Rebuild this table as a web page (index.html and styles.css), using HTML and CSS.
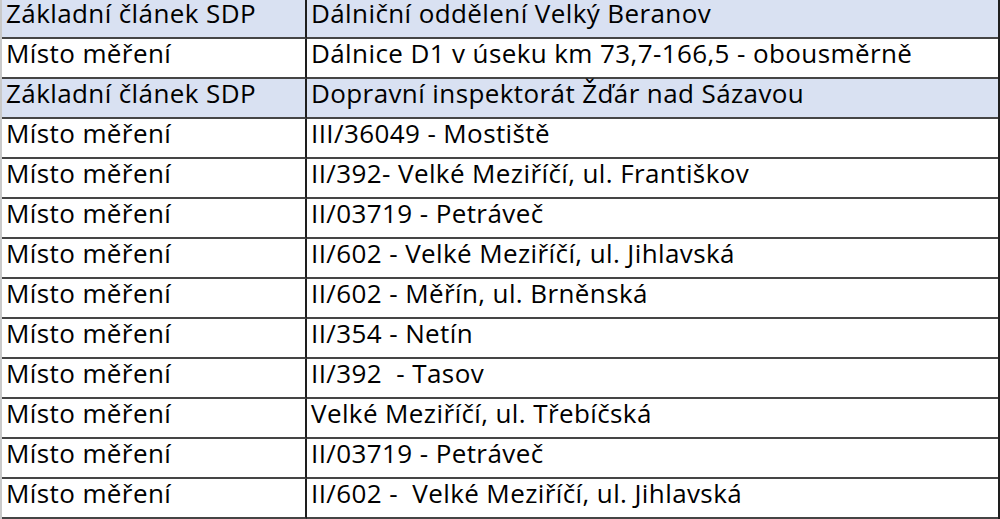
FILE: index.html
```html
<!DOCTYPE html>
<html lang="cs">
<head>
<meta charset="utf-8">
<title>Místa měření</title>
<link rel="stylesheet" href="styles.css">
</head>
<body>
<table class="grid">
  <colgroup><col class="c1"><col class="c2"></colgroup>
  <tbody>
    <tr class="head first"><td class="k">Základní článek SDP</td><td class="v">Dálniční oddělení Velký Beranov</td></tr>
    <tr><td class="k">Místo měření</td><td class="v">Dálnice D1 v úseku km 73,7-166,5 - obousměrně</td></tr>
    <tr class="head"><td class="k">Základní článek SDP</td><td class="v">Dopravní inspektorát Žďár nad Sázavou</td></tr>
    <tr><td class="k">Místo měření</td><td class="v">III/36049 - Mostiště</td></tr>
    <tr><td class="k">Místo měření</td><td class="v">II/392- Velké Meziříčí, ul. Františkov</td></tr>
    <tr><td class="k">Místo měření</td><td class="v">II/03719 - Petráveč</td></tr>
    <tr><td class="k">Místo měření</td><td class="v">II/602 - Velké Meziříčí, ul. Jihlavská</td></tr>
    <tr><td class="k">Místo měření</td><td class="v">II/602 - Měřín, ul. Brněnská</td></tr>
    <tr><td class="k">Místo měření</td><td class="v">II/354 - Netín</td></tr>
    <tr><td class="k">Místo měření</td><td class="v">II/392  - Tasov</td></tr>
    <tr><td class="k">Místo měření</td><td class="v">Velké Meziříčí, ul. Třebíčská</td></tr>
    <tr><td class="k">Místo měření</td><td class="v">II/03719 - Petráveč</td></tr>
    <tr><td class="k">Místo měření</td><td class="v">II/602 -  Velké Meziříčí, ul. Jihlavská</td></tr>
  </tbody>
</table>
</body>
</html>
```
FILE: styles.css
```css
html, body {
  margin: 0;
  padding: 0;
  background: #ffffff;
  overflow: hidden;
}

.grid {
  width: 1000px;
  table-layout: fixed;
  border-collapse: separate;
  border-spacing: 0;
  border-left: 2px solid #c9c9c9;
  border-right: 2px solid #1e1e1e;
  font-family: "Open Sans", "Noto Sans", sans-serif;
  font-size: 26px;
  line-height: 26px;
  letter-spacing: 0.4px;
  color: #000000;
}

.c1 { width: 305px; }

.grid td {
  box-sizing: border-box;
  height: 40px;
  padding: 1px 0 0 4px;
  vertical-align: top;
  white-space: pre;
  border-bottom: 2px solid #454545;
}

.grid td.k {
  border-right: 2px solid #1e1e1e;
}

.grid tr.first td {
  height: 39px;
  padding-top: 0;
}

.grid tr.head td {
  background: #d9e1f2;
}
```
